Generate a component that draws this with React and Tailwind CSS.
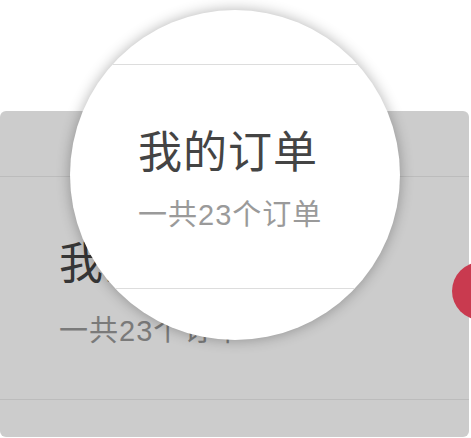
export default function App() {
  const font = { fontFamily: '"Liberation Sans", "Noto Sans CJK SC", sans-serif' };
  return (
    <div className="relative w-[471px] h-[438px] overflow-hidden bg-white" style={font}>
      <div className="mt-[111px] w-[469px] h-[326px] rounded-[6px] bg-[#cccccc] relative">
        <div className="h-[65px]" />
        <div className="h-px bg-[#bcbcbc]" />
        <div className="h-[222px] pl-[59px] pt-[65px]">
          <div className="text-[44px] leading-none tracking-[1px] text-[#363636]">我的订单</div>
          <div className="mt-[31px] text-[29px] leading-none tracking-[1px] text-[#7a7a7a]">一共23个订单</div>
        </div>
        <div className="h-px bg-[#bcbcbc]" />
        <div className="absolute left-[452px] top-[151px] w-[58px] h-[58px] rounded-full bg-[#c93a4f]" />
      </div>
      <div className="absolute left-[70px] top-[10px] w-[330px] h-[330px] rounded-full bg-white overflow-hidden shadow-[0_0_14px_rgba(0,0,0,0.3)]">
        <div className="h-[54px]" />
        <div className="h-px bg-[#dddddd]" />
        <div className="h-[223px] pl-[68px] pt-[66px]">
          <div className="text-[44px] leading-none tracking-[1px] text-[#444444]">我的订单</div>
          <div className="mt-[26px] text-[29px] leading-none tracking-[1px] text-[#9a9a9a]">一共23个订单</div>
        </div>
        <div className="h-px bg-[#dddddd]" />
      </div>
    </div>
  );
}
